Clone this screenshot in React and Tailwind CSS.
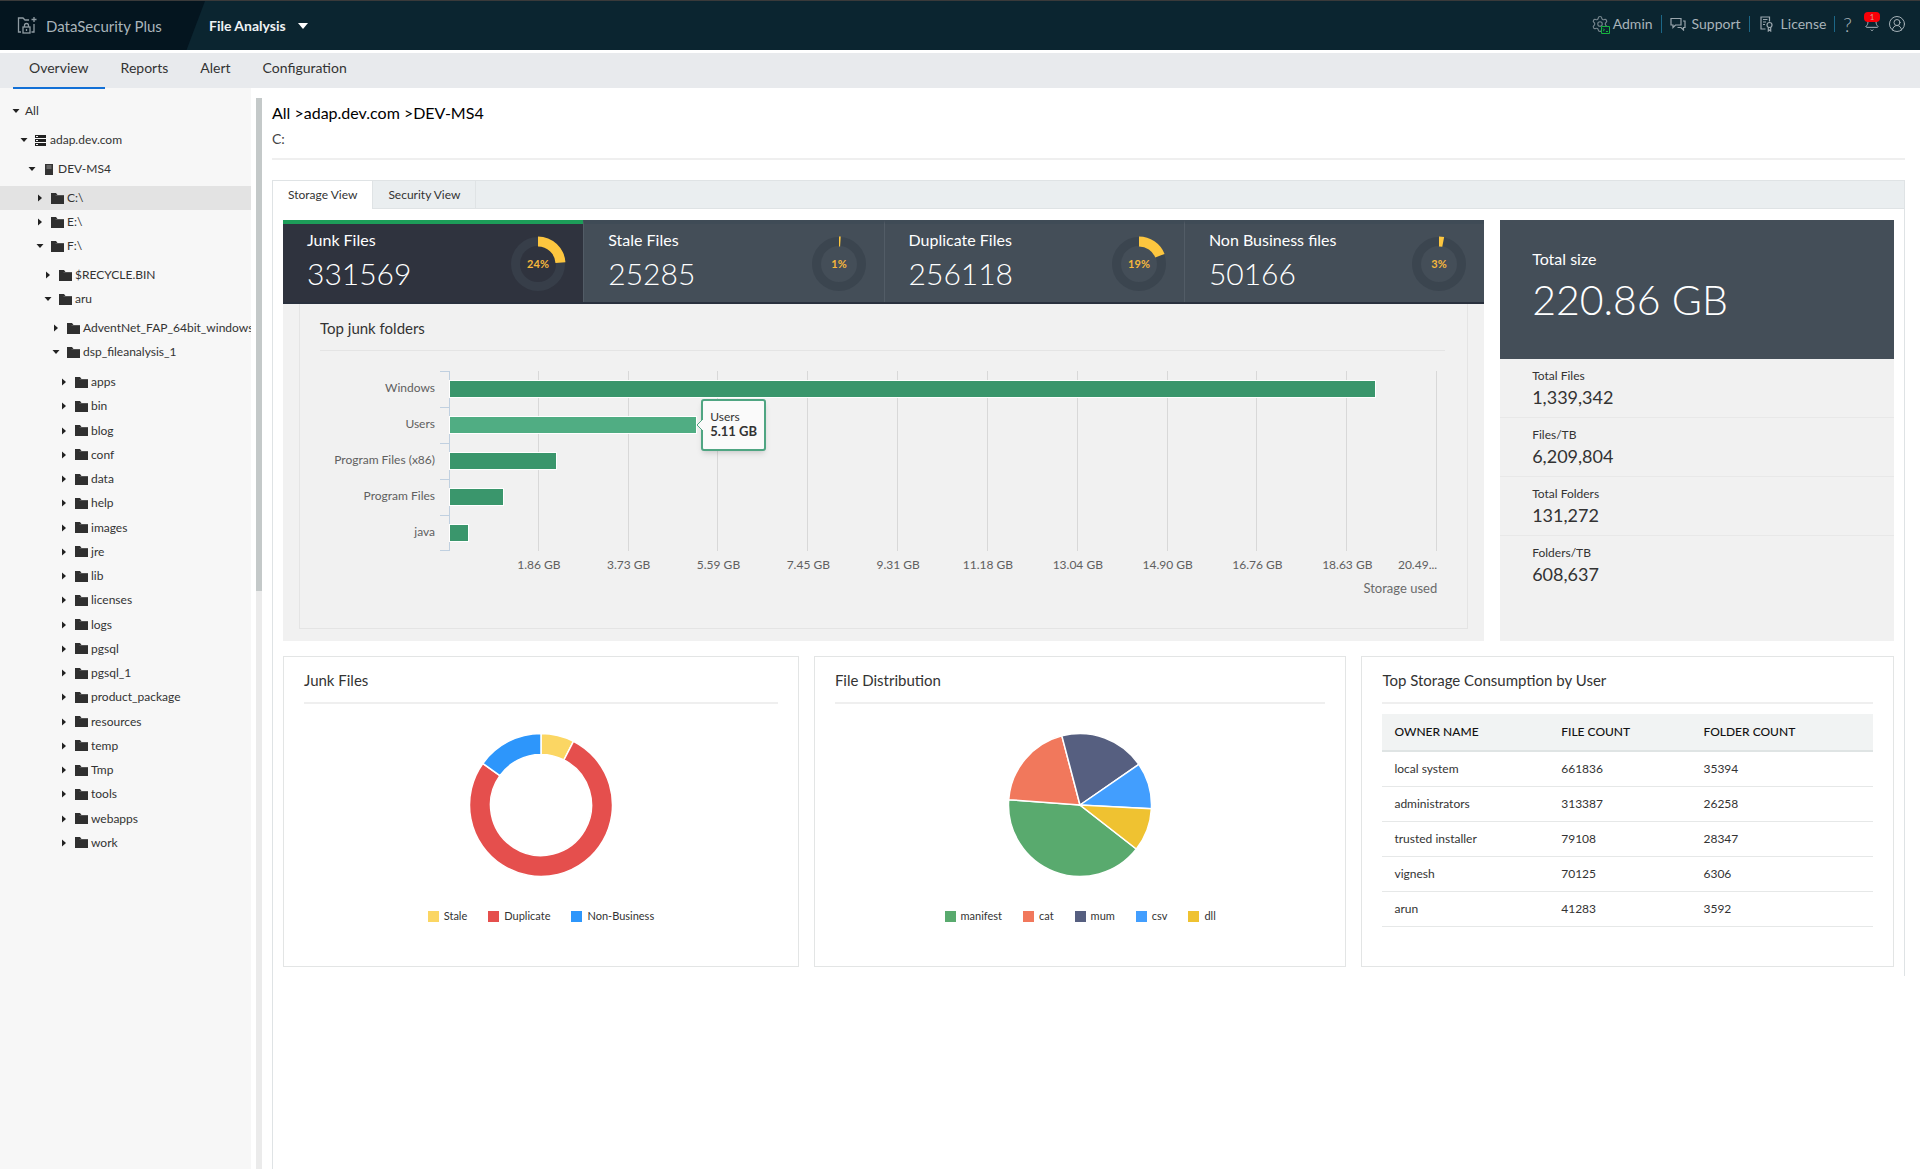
import React, { useState } from 'react';
import { Bell, CircleUserRound, Settings } from 'lucide-react';

const folders = [
  'apps', 'bin', 'blog', 'conf', 'data', 'help', 'images', 'jre', 'lib', 'licenses',
  'logs', 'pgsql', 'pgsql_1', 'product_package', 'resources', 'temp', 'Tmp', 'tools', 'webapps', 'work',
];

const navItems = ['Overview', 'Reports', 'Alert', 'Configuration'];

const stats = [
  { label: 'Junk Files', value: '331569', percent: 24 },
  { label: 'Stale Files', value: '25285', percent: 1 },
  { label: 'Duplicate Files', value: '256118', percent: 19 },
  { label: 'Non Business files', value: '50166', percent: 3 },
];

const junkFolders = [
  { name: 'Windows', size: 19.2 },
  { name: 'Users', size: 5.11 },
  { name: 'Program Files (x86)', size: 2.21 },
  { name: 'Program Files', size: 1.09 },
  { name: 'java', size: 0.38 },
];
const maxSize = 20.49;

const axisLabels = [
  '1.86 GB', '3.73 GB', '5.59 GB', '7.45 GB', '9.31 GB',
  '11.18 GB', '13.04 GB', '14.90 GB', '16.76 GB', '18.63 GB',
];

const totals = [
  { label: 'Total Files', value: '1,339,342' },
  { label: 'Files/TB', value: '6,209,804' },
  { label: 'Total Folders', value: '131,272' },
  { label: 'Folders/TB', value: '608,637' },
];

const junkSlices = [
  { name: 'Stale', from: 0, to: 27, color: '#fbd663' },
  { name: 'Duplicate', from: 27, to: 305.5, color: '#e54f4d' },
  { name: 'Non-Business', from: 305.5, to: 360, color: '#2d96fb' },
];

const fileSlices = [
  { name: 'manifest', from: 128, to: 274.3, color: '#59aa6e' },
  { name: 'cat', from: 274.3, to: 345.3, color: '#f1785c' },
  { name: 'mum', from: 345.3, to: 415.4, color: '#565f80' },
  { name: 'csv', from: 55.4, to: 93, color: '#429efe' },
  { name: 'dll', from: 93, to: 128, color: '#efc231' },
];

const owners = [
  ['local system', '661836', '35394'],
  ['administrators', '313387', '26258'],
  ['trusted installer', '79108', '28347'],
  ['vignesh', '70125', '6306'],
  ['arun', '41283', '3592'],
];

const point = (c, r, deg) => {
  const a = (deg * Math.PI) / 180;
  return `${c + r * Math.sin(a)} ${c - r * Math.cos(a)}`;
};

const slicePath = (c, outer, inner, from, to) => {
  const large = to - from > 180 ? 1 : 0;
  const arc = `M${point(c, outer, from)} A${outer} ${outer} 0 ${large} 1 ${point(c, outer, to)}`;
  if (!inner) return `${arc} L${c} ${c} Z`;
  return `${arc} L${point(c, inner, to)} A${inner} ${inner} 0 ${large} 0 ${point(c, inner, from)} Z`;
};

const LogoIcon = () => (
  <svg width="22" height="20" viewBox="0 0 22 20" fill="none" stroke="#8f9ba2" strokeWidth="1.3">
    <path d="M5 16H2.500V2H7l2 2h4" />
    <path d="M18 1v5M15.500 3.500h5M18 8v8h-2.500" />
    <rect x="7" y="11" width="7" height="6" />
    <path d="M8.500 11V9.500a2 2 0 0 1 4 0V11M10.500 13v2" />
  </svg>
);

const AdminIcon = () => (
  <span className="relative">
    <Settings size={18} strokeWidth={1.5} className="text-[#77868e]" />
    <svg width="9" height="8" viewBox="0 0 9 8" fill="none" stroke="#16b33e" className="absolute -right-px -bottom-px">
      <path d="M.5.5h8v7h-8z" fill="#0b2530" />
      <path d="M2 2.500L3.500 4 2 5M5 5.500h2" />
    </svg>
  </span>
);

const ChatIcon = () => (
  <svg width="16" height="14" viewBox="0 0 16 14" fill="none" stroke="#9aa6ad" strokeWidth="1.2">
    <path d="M1 1.500h10v6.500H5.500L3 10.500V8H1z" />
    <path d="M13 4h2v6.500h-1.500V13l-2.500-2.500H7.500" />
  </svg>
);

const LicenseIcon = () => (
  <svg width="13" height="16" viewBox="0 0 13 16" fill="none" stroke="#9aa6ad" strokeWidth="1.2">
    <path d="M5.500 13H1V1h8.500v4.500M3 3.500h4.500M3 6h3M3 8.500h2" />
    <circle cx="9.500" cy="9" r="2.500" />
    <path d="M8.300 11.500V15l1.200-1 1.200 1v-3.500" />
  </svg>
);

const FolderIcon = () => (
  <svg width="13" height="11" viewBox="0 0 13 11" fill="#2f2f2f">
    <path d="M0 0h5l1.500 2H13v9H0z" />
    <path d="M4.500 2.500H13" stroke="#777" strokeWidth=".5" />
  </svg>
);

const DomainIcon = () => (
  <svg width="11" height="11" viewBox="0 0 11 11">
    <path d="M0 0h11v3H0zM0 4h11v3H0zM0 8h11v3H0z" fill="#222" />
    <path d="M1 1.500h2M1 5.500h2M1 9.500h2" stroke="#f7f7f7" />
  </svg>
);

const ServerIcon = () => (
  <svg width="8" height="11" viewBox="0 0 8 11">
    <path d="M0 0h8v11H0z" fill="#333" />
    <path d="M1.500 2h5M1.500 4h5" stroke="#999" />
  </svg>
);

const icons = {
  domain: { Icon: DomainIcon, box: 'ml-[7px] mr-1' },
  server: { Icon: ServerIcon, box: 'ml-[9px] mr-[5px]' },
  folder: { Icon: FolderIcon, box: 'ml-[7px] mr-[3px]' },
};

const Arrow = ({ open }) => (
  <svg width="8" height="8" viewBox="0 0 8 8" fill="#222" className="shrink-0">
    {open ? <path d="M0.500 2h7L4 6z" /> : <path d="M2 0.500v7L6 4z" />}
  </svg>
);

const TreeNode = ({ name, icon, children, selected, onSelect, path, tall }) => {
  const [open, setOpen] = useState(Boolean(children));
  const active = selected === path;
  const { Icon, box } = icons[icon] || {};

  return (
    <li className="pl-2">
      <button
        type="button"
        onClick={() => {
          onSelect(path);
          if (children) setOpen(!open);
        }}
        className={`relative flex h-6 w-full items-center whitespace-nowrap text-left ${
          active ? 'before:absolute before:inset-y-0 before:-left-10 before:right-0 before:-z-10 before:bg-[#e3e3e3]' : ''
        }`}
      >
        <Arrow open={open} />
        {Icon ? <span className={box}><Icon /></span> : <span className="w-[5px]" />}
        {name}
      </button>
      {open && children && (
        <ul className={tall ? 'mt-[6px] grid min-h-[485px] auto-rows-fr' : 'mt-[5px]'}>{children}</ul>
      )}
    </li>
  );
};

const Sidebar = () => {
  const [selected, setSelected] = useState('C');
  const shared = { selected, onSelect: setSelected };

  return (
    <aside className="flex w-[262px] shrink-0">
      <div className="isolate w-[251px] overflow-hidden bg-[#f7f7f7] pt-[11px] text-xs text-[#333]">
        <ul className="pl-1">
          <TreeNode name="All" path="all" {...shared}>
            <TreeNode name="adap.dev.com" icon="domain" path="adap" {...shared}>
              <TreeNode name="DEV-MS4" icon="server" path="ms4" {...shared}>
                <TreeNode name="C:\" icon="folder" path="C" {...shared} />
                <TreeNode name="E:\" icon="folder" path="E" {...shared} />
                <TreeNode name="F:\" icon="folder" path="F" {...shared}>
                  <TreeNode name="$RECYCLE.BIN" icon="folder" path="recycle" {...shared} />
                  <TreeNode name="aru" icon="folder" path="aru" {...shared}>
                    <TreeNode name="AdventNet_FAP_64bit_windows" icon="folder" path="advent" {...shared} />
                    <TreeNode name="dsp_fileanalysis_1" icon="folder" path="dsp" tall {...shared}>
                      {folders.map((f) => (
                        <TreeNode key={f} name={f} icon="folder" path={`dsp/${f}`} {...shared} />
                      ))}
                    </TreeNode>
                  </TreeNode>
                </TreeNode>
              </TreeNode>
            </TreeNode>
          </TreeNode>
        </ul>
      </div>
      {/* Scroll track */}
      <div className="ml-[5px] mt-[10px] w-[6px] bg-[#ebebeb]">
        <div className="h-[46%] bg-[#c4c9c9]" />
      </div>
    </aside>
  );
};

const Header = () => (
  <header className="flex h-[50px] items-center border-t border-[#3a3a3a] bg-[#0b2530] text-[#a9b4ba]">
    <div className="flex h-full w-[205px] items-center bg-[#04151f] pl-4 [clip-path:polygon(0_0,100%_0,91%_100%,0_100%)]">
      <LogoIcon />
      <span className="ml-2 pt-[2px] text-[15px]">DataSecurity Plus</span>
    </div>
    <button type="button" className="flex items-center gap-3 pl-1 text-sm font-bold text-[#eef2f4]">
      File Analysis
      <svg width="10" height="6" viewBox="0 0 10 6" fill="#fff"><path d="M0 0h10L5 6z" /></svg>
    </button>
    <div className="ml-auto flex items-center pr-[14px] pb-[3px] text-sm">
      <a href="#admin" className="flex items-center gap-1 border-r border-[#1c6787] pr-2 leading-4"><AdminIcon />Admin</a>
      <a href="#support" className="flex items-center gap-[6px] border-r border-[#1c6787] px-2 leading-4"><ChatIcon />Support</a>
      <a href="#license" className="flex items-center gap-2 border-r border-[#1c6787] pl-[10px] pr-2 leading-4"><LicenseIcon />License</a>
      <button type="button" className="px-2 text-xl leading-5 font-light">?</button>
      <button type="button" aria-label="Notifications" className="relative mx-1">
        <Bell size={16} strokeWidth={1.5} />
        <span className="absolute -top-1 left-0 h-[10px] w-4 rounded-sm bg-[#fb0007] text-center text-[8px] leading-[10px] text-[#dd9a9a]">1</span>
      </button>
      <button type="button" aria-label="Account" className="ml-1">
        <CircleUserRound size={18} strokeWidth={1.3} />
      </button>
    </div>
  </header>
);

const Gauge = ({ percent, dark }) => (
  <svg width="56" height="56" viewBox="0 0 56 56" className="shrink-0">
    <circle cx="28" cy="28" r="22.5" fill="none" stroke={dark ? '#373e49' : '#3b454f'} strokeWidth="9" />
    <path d={slicePath(28, 27.5, 17.5, 0, percent * 3.6)} fill="#fdc63f" />
    <text x="28" y="32" textAnchor="middle" fontSize="11" fontWeight="700" fill="#f6b73c">{percent}%</text>
  </svg>
);

const StatTabs = () => {
  const [current, setCurrent] = useState(0);

  return (
    <div className="grid grid-cols-4 border-b-2 border-[#2a313e]">
      {stats.map((s, i) => (
        <button
          key={s.label}
          type="button"
          onClick={() => setCurrent(i)}
          className={`flex h-[82px] items-start justify-between border-t-4 pl-6 pr-[17px] text-left text-white ${
            i === current ? 'border-t-[#1d9d59] bg-[#2f333e]' : 'border-l border-l-[#525c66] border-t-[#3f4b56] bg-[#444e58]'
          }`}
        >
          <span>
            <span className="block pt-[6px] text-base leading-5">{s.label}</span>
            <span className="block pt-[5px] text-[30px] leading-9 font-light">{s.value}</span>
          </span>
          <span className="pt-3"><Gauge percent={s.percent} dark={i === current} /></span>
        </button>
      ))}
    </div>
  );
};

const JunkChart = () => (
  <div className="mx-4 mb-3 border border-t-0 border-[#e4e4e4] pl-5 pr-[22px] pb-[30px]">
    <h2 className="border-b border-[#e4e4e4] pt-3 pb-[10px] text-[15px] leading-6 text-[#333]">Top junk folders</h2>
    <div className="relative mr-2 mt-5 h-[180px] text-xs text-[#606060]">
      <div className="absolute inset-y-0 left-[129px] right-0 flex">
        {[...axisLabels, 'end'].map((l) => (
          <div key={l} className="flex-1 border-r border-[#d8d8d8]" />
        ))}
      </div>
      <div className="relative flex h-full flex-col">
        {junkFolders.map((f, i) => (
          <div key={f.name} className="flex flex-1">
            <div className="flex w-[120px] items-center justify-end pr-[5px] pb-[2px]">{f.name}</div>
            <div className={`w-[9px] border-t border-[#c0d0e0] ${i === junkFolders.length - 1 ? 'border-b' : ''}`} />
            <div className="flex flex-1 items-center border-l border-[#c0d0e0]">
              <div
                className={`relative h-4 outline outline-white ${i === 1 ? 'bg-[#50ad83]' : 'bg-[#3a966c]'}`}
                style={{ width: `${(f.size / maxSize) * 100}%` }}
              >
                {i === 1 && (
                  <div className="absolute left-full top-1/2 z-10 ml-[5px] -translate-y-1/2 rounded-[3px] border-2 border-[#4fa582] bg-[#fafafa] px-[7px] pt-2 pb-[10px] leading-[15px] whitespace-nowrap text-[#333] shadow-md">
                    <svg width="7" height="12" viewBox="0 0 7 12" className="absolute -left-[7px] top-1/2 -translate-y-1/2">
                      <path d="M7 0L1 6l6 6" fill="#fafafa" stroke="#4fa582" />
                    </svg>
                    Users<br />
                    <b className="text-[13px]">5.11 GB</b>
                  </div>
                )}
              </div>
            </div>
          </div>
        ))}
      </div>
    </div>
    <div className="mr-2 ml-[129px] flex pt-1 text-xs leading-5 text-[#606060]">
      <span className="flex-1" />
      {axisLabels.map((l) => (
        <span key={l} className="flex-2 text-center">{l}</span>
      ))}
      <span className="flex w-0 flex-1 justify-end">20.49...</span>
    </div>
    <div className="mr-2 pt-[3px] text-right text-[13px] leading-5 text-[#6b6b6b]">Storage used</div>
  </div>
);

const TotalPanel = () => (
  <div className="flex flex-col bg-[#f1f1f1]">
    <div className="h-[139px] bg-[#444e58] px-8 pt-[29px] text-white">
      <div className="text-base leading-5">Total size</div>
      <div className="text-[41px] leading-[62px] font-light">220.86 GB</div>
    </div>
    {totals.map((t, i) => (
      <div key={t.label} className={`h-[59px] px-8 pt-[7px] text-[#333] ${i < 3 ? 'border-b border-[#e8e8e8]' : ''}`}>
        <div className="text-xs leading-5">{t.label}</div>
        <div className="text-lg leading-[22px]">{t.value}</div>
      </div>
    ))}
  </div>
);

const Card = ({ title, children }) => (
  <section className="h-[311px] border border-[#e3e5e5] px-5">
    <h2 className="border-b-2 border-[#efefef] pt-[11px] pb-[10px] text-[15px] leading-6 text-[#333]">{title}</h2>
    {children}
  </section>
);

const PieChart = ({ slices, inner }) => (
  <div className="flex flex-col items-center pt-[29px]">
    <svg width="144" height="144" viewBox="0 0 144 144">
      {slices.map((s) => (
        <path key={s.name} d={slicePath(72, 71.5, inner, s.from, s.to)} fill={s.color} stroke="#fff" strokeWidth="1.5" />
      ))}
    </svg>
    <ul className="flex gap-[21px] pt-[29px] text-[11px] leading-5 text-[#333]">
      {slices.map((s) => (
        <li key={s.name} className="flex items-center gap-[5px]">
          <span className="size-[11px]" style={{ background: s.color }} />
          {s.name}
        </li>
      ))}
    </ul>
  </div>
);

const OwnerTable = () => (
  <table className="mt-[10px] w-full text-left text-xs text-[#333]">
    <thead>
      <tr className="h-[37px] border-b-2 border-[#dfe4e4] bg-[#f1f3f3] text-[#111]">
        <th className="w-[34%] pl-3 font-medium">OWNER NAME</th>
        <th className="w-[29%] pl-3 font-medium">FILE COUNT</th>
        <th className="pl-3 font-medium">FOLDER COUNT</th>
      </tr>
    </thead>
    <tbody>
      {owners.map((row) => (
        <tr key={row[0]} className="h-[35px] border-b border-[#e6e8e8]">
          {row.map((cell) => (
            <td key={cell} className="pl-3">{cell}</td>
          ))}
        </tr>
      ))}
    </tbody>
  </table>
);

export default function App() {
  const [nav, setNav] = useState('Overview');
  const [view, setView] = useState('Storage View');

  return (
    <div className="flex min-h-screen flex-col bg-white font-[Lato,sans-serif]">
      <Header />
      <nav className="relative z-10 mt-[3px] flex h-[35px] bg-[#e8eaed] pl-[13px] text-sm text-[#333]">
        {navItems.map((item) => (
          <button
            key={item}
            type="button"
            onClick={() => setNav(item)}
            className={`h-9 border-b-2 px-4 pb-1 ${item === nav ? 'border-[#1270d6]' : 'border-transparent'}`}
          >
            {item}
          </button>
        ))}
      </nav>

      <div className="flex flex-1">
        <Sidebar />
        <main className="ml-[10px] mr-[15px] flex min-w-0 flex-1 flex-col">
          <div className="border-b-2 border-[#efefef] pt-3 pb-[6px]">
            <div className="text-base leading-[26px] text-black">All &gt;adap.dev.com &gt;DEV-MS4</div>
            <div className="text-sm leading-[26px] text-[#444]">C:</div>
          </div>

          <div className="mt-5 flex flex-1 flex-col border-l border-[#dfe3e5]">
            <div className="border-r border-[#dfe3e5]">
              <div className="flex h-[29px] border-y border-[#dfe3e5] bg-[#eaeef0] text-xs text-[#333]">
                {['Storage View', 'Security View'].map((v) => (
                  <button
                    key={v}
                    type="button"
                    onClick={() => setView(v)}
                    className={`border-r border-[#dfe3e5] px-[15px] ${v === view ? '-mb-px bg-white' : ''}`}
                  >
                    {v}
                  </button>
                ))}
              </div>

              <div className="px-[10px] pt-[11px] pb-[9px]">
                <div className="grid grid-cols-[61fr_20fr] gap-4">
                  <div className="bg-[#f1f1f1]">
                    <StatTabs />
                    <JunkChart />
                  </div>
                  <TotalPanel />
                </div>

                <div className="mt-[15px] grid grid-cols-[31fr_32fr_32fr] gap-[15px]">
                  <Card title="Junk Files">
                    <PieChart slices={junkSlices} inner={50.5} />
                  </Card>
                  <Card title="File Distribution">
                    <PieChart slices={fileSlices} inner={0} />
                  </Card>
                  <Card title="Top Storage Consumption by User">
                    <OwnerTable />
                  </Card>
                </div>
              </div>
            </div>
          </div>
        </main>
      </div>
    </div>
  );
}
